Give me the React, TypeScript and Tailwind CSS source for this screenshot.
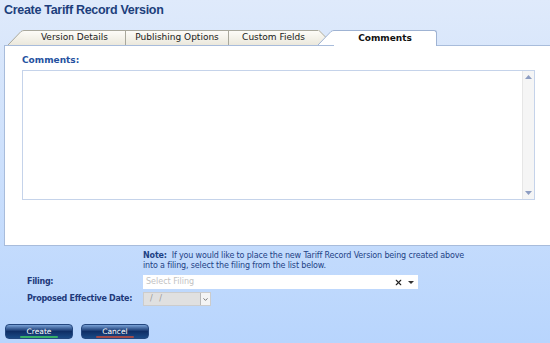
import { X, ChevronDown } from "lucide-react";

function Slant({ flip = false, active = false }: { flip?: boolean; active?: boolean }) {
    // diagonal edge of a tab
    return (
        <svg width="16" height="15" viewBox="0 0 16 15" className="block shrink-0">
            <defs>
                <linearGradient id="tabg" x1="0" y1="0" x2="0" y2="1">
                    <stop offset="0" stopColor="#fdfcf8" />
                    <stop offset="1" stopColor="#ebe8dc" />
                </linearGradient>
            </defs>
            {flip ? (
                <path d="M0 0 L1 0 L16 15 L0 15 Z" fill={active ? "#fff" : "url(#tabg)"} />
            ) : (
                <path d="M0 15 L13 1.5 Q14.5 0 16 0 L16 15 Z" fill={active ? "#fff" : "url(#tabg)"} />
            )}
            {flip ? (
                <path d="M0.5 0 L15.5 15" stroke="#a9a89c" strokeWidth="1" fill="none" />
            ) : (
                <path d="M0 15 L13 1.5 Q14.5 0.5 16 0.5" stroke={active ? "#9fb3d3" : "#a9a89c"} strokeWidth="1" fill="none" />
            )}
        </svg>
    );
}

function Tab({ label, className = "" }: { label: string; className?: string }) {
    return (
        <div
            className={`h-[15px] flex items-center justify-center text-[9px] text-[#1a1a1a] bg-gradient-to-b from-[#fdfcf8] to-[#ebe8dc] border-t border-[#a9a89c] ${className}`}
        >
            {label}
        </div>
    );
}

export default function App() {
    return (
        <div className="w-[550px] h-[343px] overflow-hidden bg-gradient-to-b from-[#dfeafb] to-[#b8d5fd] font-['DejaVu_Sans',sans-serif]">
            <h1 className="pl-[4px] pt-[2px] h-[30px] text-[12.5px] leading-[16px] font-bold tracking-[-0.3px] text-[#1d3f7c] font-['Liberation_Sans',sans-serif]">
                Create Tariff Record Version
            </h1>

            {/* tabs */}
            <div className="flex pl-[8px] h-[15px] relative z-10">
                <Slant />
                <Tab label="Version Details" className="w-[102px] border-r" />
                <Tab label="Publishing Options" className="w-[103px] border-r" />
                <Tab label="Custom Fields" className="w-[89px]" />
                <Slant flip />
                <div className="flex -ml-[16px]">
                    <Slant active />
                    <div className="w-[103px] h-[16px] bg-white border-t border-r border-[#9fb3d3] rounded-tr-[3px] flex items-center justify-center text-[9px] font-bold text-[#111]">
                        Comments
                    </div>
                </div>
            </div>

            {/* panel */}
            <div className="ml-[4px] h-[201px] bg-white border-t border-l border-b border-[#a8bcdb] pt-[9px] pl-[17px] pr-[15px]">
                <div className="text-[9px] font-bold text-[#2451a0] leading-[11px]">Comments:</div>
                <div className="mt-[4px] h-[130px] border border-[#c5d3ea] flex justify-end">
                    <div className="w-[12px] h-full bg-[#f5f5f5] border-l border-[#e6e6e6] flex flex-col items-center justify-between py-[4px]">
                        <svg width="7" height="4" viewBox="0 0 7 4">
                            <path d="M0 4 L3.5 0 L7 4 Z" fill="#8d9dc2" />
                        </svg>
                        <svg width="7" height="4" viewBox="0 0 7 4">
                            <path d="M0 0 L7 0 L3.5 4 Z" fill="#8d9dc2" />
                        </svg>
                    </div>
                </div>
            </div>

            {/* note */}
            <div className="pl-[143px] pt-[5px] text-[8px] leading-[10px] tracking-[-0.15px] text-[#1e4285]">
                <span className="font-bold">Note:</span>&nbsp; If you would like to place the new Tariff Record Version being created above
                <br />
                into a filing, select the filing from the list below.
            </div>

            {/* form */}
            <div className="mt-[4px] flex flex-col gap-[3px]">
                <div className="flex items-center">
                    <div className="w-[143px] pl-[27px] text-[8px] font-bold tracking-[-0.3px] text-[#1e3a7a]">Filing:</div>
                    <div className="w-[275px] h-[14px] bg-white flex items-center pl-[3px] pr-[4px]">
                        <span className="flex-1 text-[8px] text-[#c2c2c2]">Select Filing</span>
                        <X size={9} strokeWidth={3} className="text-[#222] mr-[5px]" />
                        <svg width="6" height="3" viewBox="0 0 6 3">
                            <path d="M0 0 L6 0 L3 3 Z" fill="#333" />
                        </svg>
                    </div>
                </div>
                <div className="flex items-center">
                    <div className="w-[143px] pl-[27px] text-[8px] font-bold tracking-[-0.3px] text-[#1e3a7a]">Proposed Effective Date:</div>
                    <div className="w-[68px] h-[14px] bg-[#e0e0e0] border border-[#cccccc] flex items-center">
                        <span className="flex-1 pl-[6px] text-[8px] text-[#9a9a9a] tracking-[2px]">/ /</span>
                        <div className="w-[10px] h-[12px] bg-[#f4f4f4] border-l border-[#b8b8b8] flex items-center justify-center">
                            <ChevronDown size={7} strokeWidth={3} className="text-[#666]" />
                        </div>
                    </div>
                </div>
            </div>

            {/* buttons */}
            <div className="flex gap-[8px] pl-[5px] mt-[18px]">
                <button className="relative w-[68px] h-[15px] rounded-[4px] border border-[#24477f] bg-gradient-to-b from-[#7aa3d8] via-[#0f2e66] to-[#1b4a86] text-white text-[7.5px] leading-[13px] overflow-hidden">
                    <span className="absolute left-[14px] right-[14px] bottom-0 h-[2px] bg-[#36b06a] rounded-full" />
                    <span className="relative">Create</span>
                </button>
                <button className="relative w-[68px] h-[15px] rounded-[4px] border border-[#24477f] bg-gradient-to-b from-[#7aa3d8] via-[#0f2e66] to-[#1b4a86] text-white text-[7.5px] leading-[13px] overflow-hidden">
                    <span className="absolute left-[14px] right-[14px] bottom-0 h-[2px] bg-[#a04a4a] rounded-full" />
                    <span className="relative">Cancel</span>
                </button>
            </div>
        </div>
    );
}
